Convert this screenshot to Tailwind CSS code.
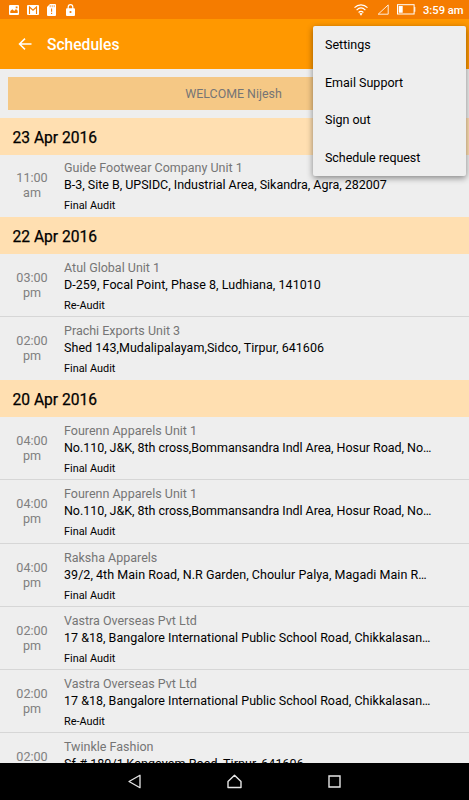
<!DOCTYPE html>
<html lang="en">
<head>
    <meta charset="UTF-8">
    <meta name="viewport" content="width=device-width, initial-scale=1.0">
    <title>Schedules</title>
    <script src="https://cdn.jsdelivr.net/npm/@tailwindcss/browser@4"></script>
</head>
<body class="bg-[#eeeeee] font-['Roboto',sans-serif] text-black">
<div class="relative flex flex-col w-[469px] h-[800px] overflow-hidden">

    <!-- Status bar -->
    <div class="flex shrink-0 items-center h-[19px] bg-[#f57c00] text-white pl-[9px] pr-[6px]">
        <svg class="w-[10px] h-[10px]" viewBox="0 0 10 10"><path fill="#fff" fill-rule="evenodd" d="M1 0h8a1 1 0 0 1 1 1v8a1 1 0 0 1-1 1H1a1 1 0 0 1-1-1V1a1 1 0 0 1 1-1zM1.3 8h7.4V5.7L7 4 5.2 6 3.3 4.2 1.3 6zM6.7 1.5v1.7h1.8V1.5z"/></svg>
        <svg class="ml-[8px] w-[12px] h-[10px]" viewBox="0 0 12 10"><rect width="12" height="10" rx="1" fill="#fff"/><path fill="none" stroke="#f57c00" stroke-width="1.1" d="M2.5 9V2L6 5.2 9.5 2v7"/></svg>
        <svg class="ml-[8px] w-[9px] h-[12px]" viewBox="0 0 9 12"><path fill="#fff" d="M3 0h5a1 1 0 0 1 1 1v10a1 1 0 0 1-1 1H1a1 1 0 0 1-1-1V3z"/><path stroke="#f57c00" stroke-width=".7" d="M3.2 1.2v2M5.2 1.2v2M7.2 1.2v2"/><path stroke="#f57c00" stroke-width="1.1" d="M4.6 4.5v3.2M4.6 8.7V10"/></svg>
        <svg class="ml-[10px] w-[9px] h-[12px]" viewBox="0 0 9 12"><path fill="none" stroke="#fff" stroke-width="1.2" d="M2.2 5V2.9a2.3 2.3 0 0 1 4.6 0V5"/><rect y="4.2" width="9" height="7.8" rx="1" fill="#fff"/><circle cx="4.5" cy="8" r="1.1" fill="#f57c00"/></svg>
        <svg class="ml-auto w-[14px] h-[12px]" viewBox="0 0 14 12"><g fill="none" stroke="#fff" stroke-width="1.2"><path d="M.5 3.6c3.8-3.7 9.2-3.7 13 0M2.6 6.1c2.7-2.6 6.1-2.6 8.8 0M4.6 8.5c1.5-1.4 3.3-1.4 4.8 0"/></g><path fill="#fff" d="M5.4 9.6c1-.8 2.2-.8 3.2 0L7 11.7z"/></svg>
        <svg class="ml-[9px] mb-px w-[12px] h-[11px]" viewBox="0 0 12 11"><path fill="none" stroke="#fff" stroke-opacity=".85" stroke-width="1" d="M1.2 10.2h10V.9z"/></svg>
        <svg class="ml-[8px] mb-px w-[19px] h-[11px]" viewBox="0 0 19 11"><rect x=".5" y=".7" width="16.6" height="9.3" fill="none" stroke="#fff" stroke-width="1"/><path fill="#fff" d="M1.7 2h4v6.8h-4zM17.3 3h1v4.8h-1z"/></svg>
        <span class="ml-[7px] mt-[2px] w-[40px] text-[11.2px] leading-none font-medium whitespace-nowrap">3:59 am</span>
    </div>

    <!-- Toolbar -->
    <header class="flex shrink-0 items-center h-[50px] bg-[#ff9800] text-white pl-[18px]">
        <svg class="w-[14px] h-[12px]" viewBox="0 0 14 12"><path fill="none" stroke="#fff" stroke-width="1.5" d="M13.5 6H1.5M7 .6 1.5 6 7 11.4"/></svg>
        <h1 class="ml-[15px] mt-[4px] text-[15.6px] leading-none font-medium">Schedules</h1>
    </header>

    <!-- Schedule list -->
    <main class="flex-1 min-h-0 overflow-hidden">
        <div class="mx-[8px] mt-[8px] mb-[8px] h-[33px] bg-[#f5c885] pr-[2px] text-center text-[12.4px] leading-[34px] text-[#757575]">WELCOME Nijesh</div>

        <h2 class="h-[37px] bg-[#ffdfb1] pl-[12.5px] text-[15.6px] leading-[40px] [-webkit-text-stroke:0.25px_#000]">23 Apr 2016</h2>
        <div class="flex h-[61.5px]">
            <div class="w-[64px] shrink-0 pt-[15px] text-center text-[12.6px] leading-[15px] text-[#808080]">11:00<br>am</div>
            <div class="pt-[4px] w-[380px]">
                <p class="text-[12.5px] leading-[17px] text-[#757575]">Guide Footwear Company Unit 1</p>
                <p class="text-[12.5px] leading-[17px] tracking-[-0.02px] truncate">B-3, Site B, UPSIDC, Industrial Area, Sikandra, Agra, 282007</p>
                <p class="pt-[5px] text-[10.9px] leading-[15px]">Final Audit</p>
            </div>
        </div>

        <h2 class="h-[37.3px] bg-[#ffdfb1] pl-[12.5px] text-[15.6px] leading-[40px] [-webkit-text-stroke:0.25px_#000]">22 Apr 2016</h2>
        <div class="flex h-[63.2px] border-b border-[#d6d6d6]">
            <div class="w-[64px] shrink-0 pt-[16px] text-center text-[12.6px] leading-[15px] text-[#808080]">03:00<br>pm</div>
            <div class="pt-[5px] w-[380px]">
                <p class="text-[12.5px] leading-[17px] text-[#757575]">Atul Global Unit 1</p>
                <p class="text-[12.5px] leading-[17px] tracking-[0.04px] truncate">D-259, Focal Point, Phase 8, Ludhiana, 141010</p>
                <p class="pt-[5px] text-[10.9px] leading-[15px]">Re-Audit</p>
            </div>
        </div>
        <div class="flex h-[63px]">
            <div class="w-[64px] shrink-0 pt-[16px] text-center text-[12.6px] leading-[15px] text-[#808080]">02:00<br>pm</div>
            <div class="pt-[5px] w-[380px]">
                <p class="text-[12.5px] leading-[17px] text-[#757575]">Prachi Exports Unit 3</p>
                <p class="text-[12.5px] leading-[17px] tracking-[0.04px] truncate">Shed 143,Mudalipalayam,Sidco, Tirpur, 641606</p>
                <p class="pt-[5px] text-[10.9px] leading-[15px]">Final Audit</p>
            </div>
        </div>

        <h2 class="h-[37px] bg-[#ffdfb1] pl-[12.5px] text-[15.6px] leading-[40px] [-webkit-text-stroke:0.25px_#000]">20 Apr 2016</h2>
        <div class="flex h-[63.3px] border-b border-[#d6d6d6]">
            <div class="w-[64px] shrink-0 pt-[16px] text-center text-[12.6px] leading-[15px] text-[#808080]">04:00<br>pm</div>
            <div class="pt-[5px] w-[380px]">
                <p class="text-[12.5px] leading-[17px] text-[#757575]">Fourenn Apparels Unit 1</p>
                <p class="text-[12.5px] leading-[17px] tracking-[-0.045px] truncate">No.110, J&amp;K, 8th cross,Bommansandra Indl Area, Hosur Road, No…</p>
                <p class="pt-[5px] text-[10.9px] leading-[15px]">Final Audit</p>
            </div>
        </div>
        <div class="flex h-[63.3px] border-b border-[#d6d6d6]">
            <div class="w-[64px] shrink-0 pt-[16px] text-center text-[12.6px] leading-[15px] text-[#808080]">04:00<br>pm</div>
            <div class="pt-[5px] w-[380px]">
                <p class="text-[12.5px] leading-[17px] text-[#757575]">Fourenn Apparels Unit 1</p>
                <p class="text-[12.5px] leading-[17px] tracking-[-0.045px] truncate">No.110, J&amp;K, 8th cross,Bommansandra Indl Area, Hosur Road, No…</p>
                <p class="pt-[5px] text-[10.9px] leading-[15px]">Final Audit</p>
            </div>
        </div>
        <div class="flex h-[63.3px] border-b border-[#d6d6d6]">
            <div class="w-[64px] shrink-0 pt-[16px] text-center text-[12.6px] leading-[15px] text-[#808080]">04:00<br>pm</div>
            <div class="pt-[5px] w-[380px]">
                <p class="text-[12.5px] leading-[17px] text-[#757575]">Raksha Apparels</p>
                <p class="text-[12.5px] leading-[17px] tracking-[0.04px] truncate">39/2, 4th Main Road, N.R Garden, Choulur Palya, Magadi Main R…</p>
                <p class="pt-[5px] text-[10.9px] leading-[15px]">Final Audit</p>
            </div>
        </div>
        <div class="flex h-[63.3px] border-b border-[#d6d6d6]">
            <div class="w-[64px] shrink-0 pt-[16px] text-center text-[12.6px] leading-[15px] text-[#808080]">02:00<br>pm</div>
            <div class="pt-[5px] w-[380px]">
                <p class="text-[12.5px] leading-[17px] text-[#757575]">Vastra Overseas Pvt Ltd</p>
                <p class="text-[12.5px] leading-[17px] tracking-[0.01px] truncate">17 &amp;18, Bangalore International Public School Road, Chikkalasan…</p>
                <p class="pt-[5px] text-[10.9px] leading-[15px]">Final Audit</p>
            </div>
        </div>
        <div class="flex h-[63.3px] border-b border-[#d6d6d6]">
            <div class="w-[64px] shrink-0 pt-[16px] text-center text-[12.6px] leading-[15px] text-[#808080]">02:00<br>pm</div>
            <div class="pt-[5px] w-[380px]">
                <p class="text-[12.5px] leading-[17px] text-[#757575]">Vastra Overseas Pvt Ltd</p>
                <p class="text-[12.5px] leading-[17px] tracking-[0.01px] truncate">17 &amp;18, Bangalore International Public School Road, Chikkalasan…</p>
                <p class="pt-[5px] text-[10.9px] leading-[15px]">Re-Audit</p>
            </div>
        </div>
        <div class="flex h-[63.3px]">
            <div class="w-[64px] shrink-0 pt-[16px] text-center text-[12.6px] leading-[15px] text-[#808080]">02:00</div>
            <div class="pt-[5px] w-[380px]">
                <p class="text-[12.5px] leading-[17px] text-[#757575]">Twinkle Fashion</p>
                <p class="text-[12.5px] leading-[17px] tracking-[0.06px] truncate">Sf.# 180/1,Kangayam Road, Tirpur, 641606</p>
            </div>
        </div>
    </main>

    <!-- Navigation bar -->
    <nav class="relative flex shrink-0 items-center h-[37px] bg-black pl-[127px]">
        <svg class="w-[15px] h-[15px]" viewBox="0 0 15 15"><path fill="none" stroke="#e6e6e6" stroke-width="1.3" stroke-linejoin="round" d="M13 1.3v12.4L2 7.5z"/></svg>
        <svg class="ml-[85px] w-[15px] h-[15px]" viewBox="0 0 15 15"><path fill="none" stroke="#e6e6e6" stroke-width="1.4" stroke-linejoin="round" d="M7.5 1.3 14 7.5v6H1v-6z"/></svg>
        <svg class="ml-[85px] w-[15px] h-[15px]" viewBox="0 0 15 15"><path fill="none" stroke="#e6e6e6" stroke-width="1.4" d="M2 2h11v11H2z"/></svg>
    </nav>

    <!-- Overflow menu -->
    <ul class="absolute top-[26px] left-[313px] w-[153px] h-[150px] rounded-[2px] bg-[#eeeeee] pl-[12px] text-[12.5px] leading-[38.5px] shadow-[0_2px_6px_rgba(0,0,0,0.45)]">
        <li class="h-[37.5px]">Settings</li>
        <li class="h-[37.5px]">Email Support</li>
        <li class="h-[37.5px]">Sign out</li>
        <li class="h-[37.5px] tracking-[-0.05px]">Schedule request</li>
    </ul>
</div>
</body>
</html>
